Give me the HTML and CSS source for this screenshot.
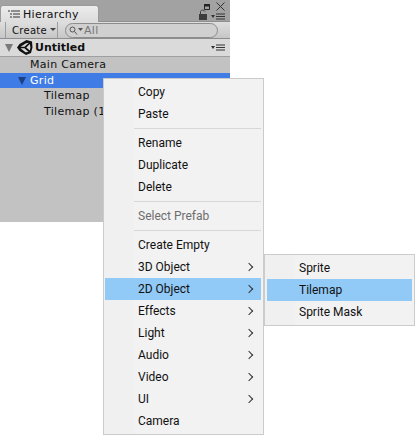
FILE: index.html
```html
<!DOCTYPE html>
<html lang="en">
<head>
<meta charset="utf-8">
<title>Hierarchy</title>
<link rel="stylesheet" href="styles.css">
</head>
<body>
<div class="page">
  <section class="panel">
    <div class="tabbar">
      <div class="tab">
        <svg class="tab-icon" width="12" height="9" viewBox="0 0 12 9"><path d="M0 1h2M3 1h9M2 4h2M5 4h7M2 7h2M5 7h7" stroke="#333" fill="none"/></svg>
        <span>Hierarchy</span>
      </div>
      <div class="tab-tools">
        <svg width="10" height="11" viewBox="0 0 10 11" class="lock"><path d="M1 5h8v6H1z" fill="#3c3c3c"/><path d="M2.500 5V2.500C2.500 1 6 .5 7 2.500" stroke="#3c3c3c" fill="none"/></svg>
        <div class="win-btns">
          <svg width="6" height="6" viewBox="0 0 6 6"><path d="M.5 .5h5v5h-5z" fill="none" stroke="#222"/><path d="M0 0h6v2.500H0z" fill="#222"/></svg>
          <svg width="9" height="9" viewBox="0 0 9 9"><path d="M.5 .5l8 8M8.500 .5l-8 8" stroke="#333" fill="none"/></svg>
        </div>
        <svg class="menu-ico" width="14" height="7" viewBox="0 0 14 7"><path d="M0 2h4L2 5z" fill="#333"/><path d="M5 1h9M5 3.500h9M5 6h9" stroke="#333" fill="none"/></svg>
      </div>
    </div>
    <div class="toolbar">
      <div class="create">Create<i class="caret"></i></div>
      <div class="search">
        <svg width="14" height="9" viewBox="0 0 14 9"><circle cx="3.500" cy="3.500" r="2.500" fill="none" stroke="#555"/><path d="M5.500 5.500l2.500 3" stroke="#555"/><path d="M9 2h5l-2.500 3z" fill="#555"/></svg>
        <span>All</span>
      </div>
    </div>
    <div class="scene">
      <i class="tri tri-gray"></i>
      <svg class="unity" width="16" height="15" viewBox="0 0 16 15"><path d="M9.500 0L15 1.500 15.500 7.500 14 13 9 15 2.500 11 0 7.500 2.500 4z" fill="#111"/><path d="M9 3.200L11.800 2.800 7.500 6.800 3.500 6.800zM12.800 4L13.400 7.500 12.800 10.500 9.300 7.500zM3.500 8.300L7.500 8.300 11.500 12 8.500 12.300z" fill="#dadada"/></svg>
      <strong>Untitled</strong>
      <svg class="menu-ico scene-menu" width="14" height="7" viewBox="0 0 14 7"><path d="M0 2h4L2 5z" fill="#333"/><path d="M5 1h9M5 3.500h9M5 6h9" stroke="#333" fill="none"/></svg>
    </div>
    <div class="row lvl1">Main Camera</div>
    <div class="row row-selected lvl1"><i class="tri tri-blue"></i>Grid</div>
    <div class="row lvl2">Tilemap</div>
    <div class="row lvl2">Tilemap (1)</div>
  </section>

  <nav class="menu main-menu">
    <div class="item">Copy</div>
    <div class="item">Paste</div>
    <div class="sep"></div>
    <div class="item">Rename</div>
    <div class="item">Duplicate</div>
    <div class="item">Delete</div>
    <div class="sep"></div>
    <div class="item disabled">Select Prefab</div>
    <div class="sep"></div>
    <div class="item">Create Empty</div>
    <div class="item sub">3D Object</div>
    <div class="item sub active">2D Object</div>
    <div class="item sub">Effects</div>
    <div class="item sub">Light</div>
    <div class="item sub">Audio</div>
    <div class="item sub">Video</div>
    <div class="item sub">UI</div>
    <div class="item">Camera</div>
  </nav>

  <nav class="menu sub-menu">
    <div class="item">Sprite</div>
    <div class="item active">Tilemap</div>
    <div class="item">Sprite Mask</div>
  </nav>
</div>
</body>
</html>
```
FILE: styles.css
```css
* { box-sizing: border-box; }
html, body { margin: 0; padding: 0; background: #fff; }
.page {
  position: relative;
  width: 415px;
  height: 435px;
  overflow: hidden;
}
.panel {
  width: 230px;
  height: 222px;
  background: #c2c2c2;
  font: 11px/15px "DejaVu Sans", sans-serif;
  color: #111;
  letter-spacing: .3px;
}
.tabbar {
  height: 22px;
  background: #a2a2a2;
  display: flex;
  align-items: flex-end;
  justify-content: space-between;
  border-bottom: 1px solid #8f8f8f;
}
.tab {
  width: 99px;
  height: 17px;
  margin-bottom: -1px;
  background: linear-gradient(#ececec, #dcdcdc);
  border: 1px solid #9a9a9a;
  border-bottom: 0;
  border-radius: 3px 3px 0 0;
  display: flex;
  align-items: center;
  gap: 3px;
  padding-left: 7px;
  font-size: 11px;
}
.tab-icon { flex: none; }
.tab-tools {
  position: relative;
  width: 32px;
  height: 21px;
}
.lock { position: absolute; left: 0; top: 9px; }
.win-btns {
  position: absolute;
  left: 6px;
  top: 2px;
  display: flex;
  align-items: center;
  gap: 6px;
}
.tab-tools .menu-ico { position: absolute; right: 5px; top: 13px; }
.toolbar {
  height: 17px;
  background: linear-gradient(#dedede, #c6c6c6);
  border-bottom: 1px solid #8e8e8e;
  display: flex;
  align-items: center;
  padding-left: 5px;
}
.create {
  width: 53px;
  height: 16px;
  border-left: 1px solid #9d9d9d;
  border-right: 1px solid #9d9d9d;
  display: flex;
  align-items: center;
  gap: 3px;
  padding-left: 6px;
  font-size: 10px;
}
.caret {
  width: 0;
  height: 0;
  border: 3px solid transparent;
  border-top: 3px solid #444;
  border-bottom: 0;
  margin-top: -2px;
}
.search {
  width: 153px;
  height: 15px;
  margin-left: 7px;
  background: #d0d0d0;
  border: 1px solid #8c8c8c;
  border-radius: 8px;
  display: flex;
  align-items: center;
  gap: 1px;
  padding-left: 3px;
  color: #777;
  font-size: 11px;
}
.scene {
  height: 18px;
  background: #dadada;
  border-bottom: 1px solid #9f9f9f;
  display: flex;
  align-items: center;
  padding: 0 5px;
  position: relative;
}
.unity { margin-left: 4px; flex: none; }
.scene strong { margin-left: 2px; font-size: 11px; letter-spacing: 0; }
.scene-menu { margin-left: auto; }
.tri {
  width: 0;
  height: 0;
  border: 4px solid transparent;
  border-top: 8px solid #7a7a7a;
  border-bottom: 0;
  display: inline-block;
}
.tri-blue {
  border-width: 8px 4.500px 0;
  border-top-color: #1d3f86;
  position: absolute;
  left: 18px;
  top: 4px;
}
.row {
  position: relative;
  height: 16px;
  line-height: 15px;
}
.lvl1 { padding-left: 30px; }
.lvl2 { padding-left: 44px; }
.row-selected { background: #3f7ce6; color: #fff; height: 15px; }
.menu {
  position: absolute;
  background: #f2f2f2;
  border: 1px solid #cbcbcb;
  padding: 2px;
  font: 12px/22px Roboto, "Open Sans", sans-serif;
  color: #111;
}
.main-menu {
  left: 103px;
  top: 78px;
  width: 161px;
  height: 357px;
  padding-left: 1px;
  background: linear-gradient(90deg, #f0f0f0 30px, #f2f2f2 30px);
}
.sub-menu {
  left: 264px;
  top: 254px;
  width: 151px;
  height: 72px;
  background: linear-gradient(90deg, #f0f0f0 30px, #f2f2f2 30px);
}
.item {
  position: relative;
  height: 22px;
  padding-left: 33px;
  white-space: nowrap;
}
.sub-menu .item { padding-left: 32px; }
.item.disabled { color: #6d6d6d; }
.item.active { background: #91c9f7; }
.item.sub::after {
  content: "";
  position: absolute;
  left: 141px;
  top: 8px;
  width: 5px;
  height: 5px;
  border-top: 1px solid #333;
  border-right: 1px solid #333;
  transform: rotate(45deg);
}
.sep {
  height: 7px;
  margin-left: 29px;
  background: linear-gradient(#d7d7d7, #d7d7d7) center / 100% 1px no-repeat;
}
```
